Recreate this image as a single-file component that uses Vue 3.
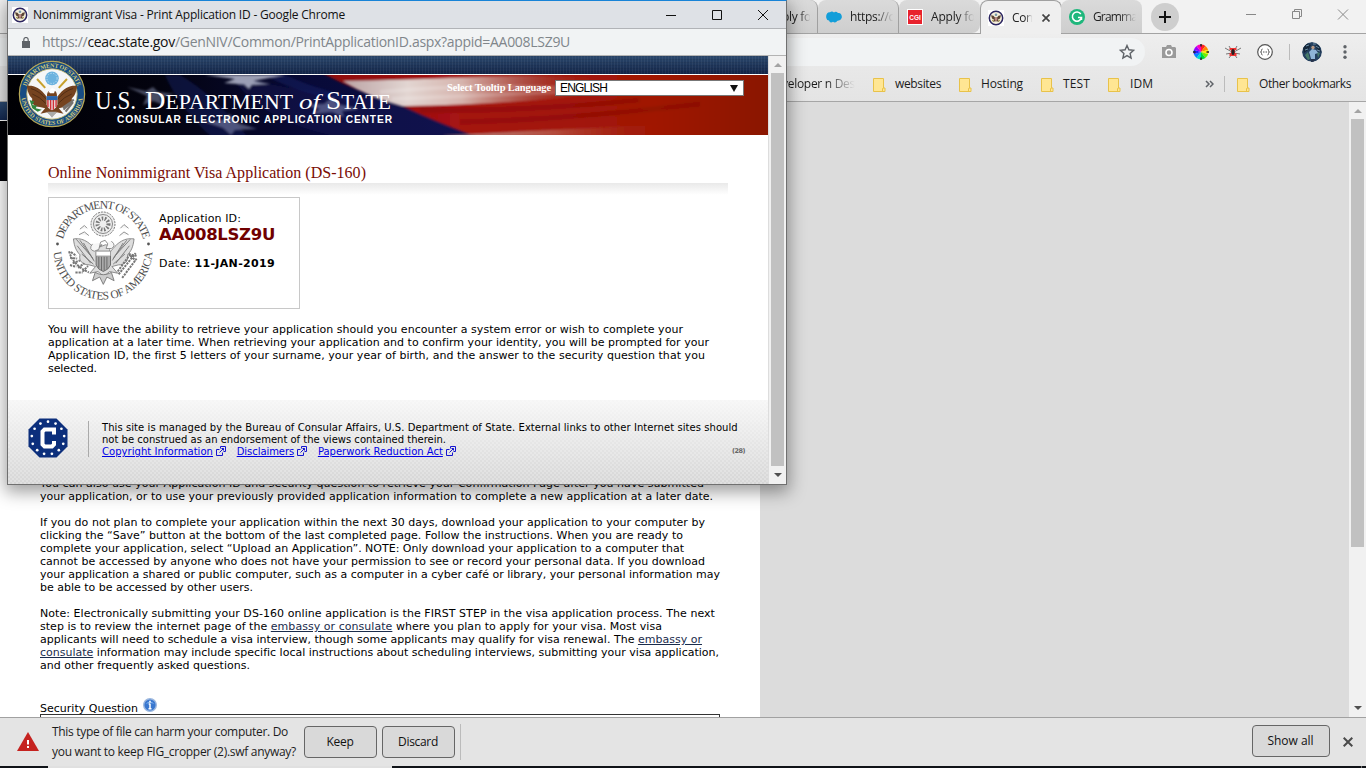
<script setup>
const fit = (el, { value }) => {
  el.style.letterSpacing = '0px'
  const natural = el.getBoundingClientRect().width
  el.style.letterSpacing = (value - natural) / el.textContent.length + 'px'
}
const vFit = { mounted: fit }

const tabs = [
  { text: 'ply fo', icon: 'none', w: 29 },
  { text: 'https://c', icon: 'cloud', w: 44 },
  { text: 'Apply fo', icon: 'cgi', w: 44 },
  { text: 'Con', icon: 'seal', w: 21, active: true },
  { text: 'Gramma', icon: 'g', w: 44 },
]
const marks = [
  { text: 'websites', w: 46 },
  { text: 'Hosting', w: 42 },
  { text: 'TEST', w: 27 },
  { text: 'IDM', w: 23 },
]
const retrieve = [
  [['You can also use your Application ID and security question to retrieve your Confirmation Page after you have submitted'], 664],
  [['your application, or to use your previously provided application information to complete a new application at a later date.'], 673],
]
const upload = [
  [['If you do not plan to complete your application within the next 30 days, download your application to your computer by'], 665],
  [['clicking the “Save” button at the bottom of the last completed page. Follow the instructions. When you are ready to'], 643],
  [['complete your application, select “Upload an Application”. NOTE: Only download your application to a computer that'], 644],
  [['cannot be accessed by anyone who does not have your permission to see or record your personal data. If you download'], 665],
  [['your application a shared or public computer, such as a computer in a cyber café or library, your personal information may'], 680],
  [['be able to be accessed by other users.'], 213],
]
const note = [
  [['Note: Electronically submitting your DS-160 online application is the FIRST STEP in the visa application process. The next'], 675],
  [['step is to review the internet page of the ', '*embassy or consulate', ' where you plan to apply for your visa. Most visa'], 622],
  [['applicants will need to schedule a visa interview, though some applicants may qualify for visa renewal. The ', '*embassy or'], 662],
  [['*consulate', ' information may include specific local instructions about scheduling interviews, submitting your visa application,'], 679],
  [['and other frequently asked questions.'], 210],
]
const paragraphs = [retrieve, upload, note]
const ability = [
  ['You will have the ability to retrieve your application should you encounter a system error or wish to complete your', 635],
  ['application at a later time. When retrieving your application and to confirm your identity, you will be prompted for your', 661],
  ['Application ID, the first 5 letters of your surname, your year of birth, and the answer to the security question that you', 657],
  ['selected.', 49],
]
const links = [
  ['Copyright Information', 111],
  ['Disclaimers', 57.5],
  ['Paperwork Reduction Act', 125],
]
const wheel = ['#f22', '#f80', '#fe0', '#7e0', '#0d3', '#0dc', '#08f', '#22f', '#90f', '#f0b'].map((c, i) => {
  const a = (i * 36 - 90) * Math.PI / 180, b = ((i + 1) * 36 - 90) * Math.PI / 180
  return { c, d: `M8 8L${8 + 7.5 * Math.cos(a)} ${8 + 7.5 * Math.sin(a)}A7.5 7.5 0 0 1 ${8 + 7.5 * Math.cos(b)} ${8 + 7.5 * Math.sin(b)}Z` }
})
const dots = Array.from({ length: 13 }, (_, i) => {
  const a = (i * 360 / 13) * Math.PI / 180
  return { x: 20 + 16.3 * Math.sin(a), y: 20 - 16.3 * Math.cos(a) }
})
</script>

<template>
  <div class="desktop">
    <svg class="defs" width="0" height="0" aria-hidden="true">
      <symbol id="minis" viewBox="0 0 16 16">
        <rect width="16" height="16" fill="#fff" />
        <circle cx="8" cy="8" r="6.7" fill="#f6f0dc" stroke="#2b2560" stroke-width="1.5" />
        <path d="M3 5.200L5.500 5.800 7 7.500H9L10.500 5.800 13 5.200 12 8.500 9.800 9.800 11.500 11.800 8 11.200 4.500 11.800 6.200 9.800 4 8.500Z" fill="#5b4433" />
        <path d="M6.700 7.500h2.600v2.600L8 11.300 6.700 10.100Z" fill="#b88" />
        <circle cx="8" cy="4.800" r="1.300" fill="#79a" />
        <path d="M4 10l1.500 1M12 10l-1.500 1" stroke="#a93" />
      </symbol>
      <symbol id="eagle" viewBox="0 0 100 100">
        <path d="M48 45C43 45 42 52 43 55C31 38 21 37 13 38C14 48 17 53 21 57C19 65 25 69 32 69L40 71L33 79L43 77L50 83L57 77L67 79L60 71L68 69C75 69 81 65 79 57C83 53 86 48 87 38C79 37 69 38 57 55C58 52 57 45 52 45L44 48Z" />
      </symbol>
    </svg>

    <section class="browser">
      <div class="tabs">
        <div v-for="t in tabs" :key="t.text" class="tab" :class="{ active: t.active }">
          <svg class="fav" width="16" height="16" viewBox="0 0 16 16">
            <path v-if="t.icon === 'cloud'" d="M.3 9C-.3 6 1 3 4 3.200Q6 1.500 8 3.500Q10 2 12 4C15 3.500 16.300 6.500 15.700 9Q14.500 12 11.500 11.800Q9.500 14.500 7 12.800Q4 14.500 3 11.500Q.8 11.500 .3 9Z" fill="#139ed9" />
            <template v-else-if="t.icon === 'cgi'">
              <rect width="16" height="16" fill="#fff" /><rect x="1" y="1" width="14" height="14" fill="#e8222c" />
              <text x="8" y="10.600" text-anchor="middle" class="cgi">CGI</text>
            </template>
            <use v-else-if="t.icon === 'seal'" href="#minis" />
            <template v-else-if="t.icon === 'g'">
              <circle cx="8" cy="8" r="8" fill="#1fb77c" />
              <path d="M11.800 5A4.600 4.600 0 1 0 12.500 8.500H9M12.500 8.500V11" fill="none" stroke="#fff" stroke-width="1.500" />
            </template>
          </svg>
          <span v-fit="t.w" class="ttext">{{ t.text }}</span>
          <svg v-if="t.active" class="tclose" width="8" height="8" viewBox="0 0 8 8"><path d="M.5.5l7 7m0-7l-7 7" stroke="#444" stroke-width="1.700" /></svg>
        </div>
        <div class="plus"><svg width="12" height="12" viewBox="0 0 12 12"><path d="M6 0v12M0 6h12" stroke="#111" stroke-width="2" /></svg></div>
        <svg class="winbtns" width="106" height="16" viewBox="0 0 106 16" fill="none" stroke="#888">
          <path d="M1 8.500h10M47.500 5.500h7v7h-7zM49.500 5.500v-2h7v7h-2M93 3.500l10 10m0-10l-10 10" />
        </svg>
      </div>

      <div class="toolbar">
        <div class="omni">
          <svg width="16" height="16" viewBox="0 0 16 16"><path d="M8 1.500l1.900 4.300 4.700.5-3.500 3.100 1 4.600L8 11.600 3.900 14l1-4.600L1.400 6.300l4.700-.5z" fill="none" stroke="#5f6368" stroke-width="1.400" /></svg>
        </div>
        <svg class="ext" width="16" height="16" viewBox="0 0 16 16"><path d="M1 3h4L6 1h4l1 2h3l1 1v10H1z" fill="#9a9a9a" /><circle cx="8" cy="8.500" r="3" fill="none" stroke="#fff" stroke-width="1.600" /></svg>
        <svg class="ext" width="16" height="16" viewBox="0 0 16 16"><path v-for="w in wheel" :key="w.c" :d="w.d" :fill="w.c" /><path d="M8 0v2.500M8 13.500V16M0 8h2.500M13.500 8H16" stroke="#222" stroke-width="1.500" /></svg>
        <svg class="ext" width="16" height="16" viewBox="0 0 16 16"><path d="M7 7L4 2M9 7l3-5M7 8L0 4M9 8l7-4M7 9l-6 1M9 9l6 1M7 10l-3 4M9 10l3 4" stroke="#777" /><path d="M4.500 4h7v2H10v3h1.500v3h-7V9H6V6H4.500z" fill="#e33" /><ellipse cx="8" cy="8" rx="1.600" ry="3" fill="#222" /></svg>
        <svg class="ext" width="16" height="16" viewBox="0 0 16 16" fill="none" stroke="#555"><circle cx="8" cy="8" r="7.300" fill="#fff" stroke-width="1.200" /><path d="M5.500 5Q4.500 5 4.500 6.500T3.500 8Q4.500 8 4.500 9.500T5.500 11M10.500 5Q11.500 5 11.500 6.500T12.500 8Q11.500 8 11.500 9.500T10.500 11" /><path d="M6 8h4" stroke-dasharray="1 .5" /></svg>
        <i class="sep"></i>
        <svg class="avatar" width="20" height="20" viewBox="0 0 20 20"><circle cx="10" cy="10" r="10" fill="#25405f" /><path d="M1 6L5 1.500 9 3 6 8 2 11zM13 2l4 2 2 6-4-3z" fill="#15273a" /><path d="M4 4l3-1M3 8l3-1M14 4l3 2M11 2l3 0M15 8l3 1" stroke="#6d8fa8" /><path d="M3 13l3-3 2 7-2 1zM15 10l3 1-2 5z" fill="#477a6a" /><path d="M7 10l3-3 4 1 2 3-3 1v5H9l-1-4z" fill="#8eb4d6" /><circle cx="11" cy="5.500" r="1.700" fill="#b99984" /><path d="M9 17h4l-1 3h-3z" fill="#26334c" /></svg>
        <svg class="menu" width="4" height="16" viewBox="0 0 4 16" fill="#5f6368"><circle cx="2" cy="2.700" r="1.700" /><circle cx="2" cy="8" r="1.700" /><circle cx="2" cy="13.300" r="1.700" /></svg>
      </div>

      <div class="bookmarks">
        <span v-fit="73" class="dev">veloper n Des</span>
        <div class="marks">
          <div v-for="m in marks" :key="m.text" class="mark">
            <svg width="13" height="14" viewBox="0 0 13 14"><path d="M.5.500h10v9.500h1.500v3.500H.5z" fill="#ffe693" stroke="#e8c24a" /><path d="M9.500 13v-2.500h1" fill="none" stroke="#e8c24a" /></svg>
            <span v-fit="m.w">{{ m.text }}</span>
          </div>
        </div>
        <svg class="more" width="9" height="8" viewBox="0 0 9 8"><path d="M1 1l3 3-3 3M5 1l3 3-3 3" fill="none" stroke="#5f6368" stroke-width="1.500" /></svg>
        <i class="sep"></i>
        <div class="mark other">
          <svg width="13" height="14" viewBox="0 0 13 14"><path d="M.5.500h10v9.500h1.500v3.500H.5z" fill="#ffe693" stroke="#e8c24a" /><path d="M9.500 13v-2.500h1" fill="none" stroke="#e8c24a" /></svg>
          <span v-fit="92">Other bookmarks</span>
        </div>
      </div>

      <div class="viewport">
        <main class="page">
          <div class="pagebar"></div>
          <div class="pageflag"></div>
          <div class="article">
            <div v-for="(p, i) in paragraphs" :key="i" class="para">
              <div v-for="(l, j) in p" :key="j" class="row"><span v-fit="l[1]" class="line"><span v-for="(s, k) in l[0]" :key="k" :class="{ inlink: s[0] === '*' }">{{ s.replace('*', '') }}</span></span></div>
            </div>
            <div class="question">
              <span v-fit="98" class="line">Security Question</span>
              <svg width="14" height="14" viewBox="0 0 14 14"><circle cx="7" cy="7" r="6.300" fill="#3977cf" stroke="#9db8df" stroke-width="1.400" /><path d="M2.500 6Q7 1 11.500 6Q7 4 2.500 6" fill="#83b5f1" /><path d="M7 2.800v1.700M7 5.800v5M5.700 6h1.500M5.500 10.700h3" stroke="#fff" stroke-width="1.500" /></svg>
            </div>
            <div class="field"></div>
          </div>
        </main>
        <div class="scroll outer"><i class="up"></i><b></b><i class="down"></i></div>
      </div>

      <footer class="downloads">
        <svg class="warn" width="22" height="20" viewBox="0 0 22 20"><path d="M11 0L22 19H0z" fill="#c5221f" /><path d="M11 8v4.500M11 14v2" stroke="#fff" stroke-width="2" /></svg>
        <div class="warning"><div><span v-fit="236">This type of file can harm your computer. Do</span></div><div><span v-fit="244">you want to keep FIG_cropper (2).swf anyway?</span></div></div>
        <button class="btn"><span v-fit="27">Keep</span></button>
        <button class="btn"><span v-fit="40">Discard</span></button>
        <i class="dsep"></i>
        <button class="btn all"><span v-fit="46">Show all</span></button>
        <svg width="10" height="10" viewBox="0 0 10 10"><path d="M.7.700l8.600 8.600m0-8.600L.7 9.300" stroke="#4a4a4a" stroke-width="2" /></svg>
      </footer>
      <div class="taskbar"><i class="lit"></i><i class="tick"></i></div>
    </section>

    <section class="popup">
      <div class="title">
        <svg width="16" height="16"><use href="#minis" /></svg>
        <span v-fit="312">Nonimmigrant Visa - Print Application ID - Google Chrome</span>
        <svg class="pbtns" width="104" height="12" viewBox="0 0 104 12" fill="none" stroke="#111"><path d="M0 6.500h10M46.500 1.500h9v9h-9zM92 1l10 10m0-10L92 11" /></svg>
      </div>
      <div class="address">
        <svg width="8" height="11" viewBox="0 0 8 11"><path d="M0 4h8v7H0z" fill="#5f6368" /><path d="M1.800 4V2.700a2.200 2.200 0 0 1 4.400 0V4" fill="none" stroke="#5f6368" stroke-width="1.200" /></svg>
        <span v-fit="528">https://<em>ceac.state.gov</em>/GenNIV/Common/PrintApplicationID.aspx?appid=AA008LSZ9U</span>
      </div>
      <div class="pbody">
        <div class="doc">
          <header class="banner">
            <div class="navy"></div>
            <svg class="flag" width="760" height="60" viewBox="8 75 760 60" preserveAspectRatio="none">
              <defs>
                <filter id="soft" x="-5%" y="-20%" width="110%" height="140%"><feGaussianBlur stdDeviation=".9" /></filter>
                <linearGradient id="night"><stop offset="0" stop-color="#000004" /><stop offset=".2" stop-color="#03030f" /><stop offset=".4" stop-color="#080a38" /><stop offset=".6" stop-color="#0a0d4a" /></linearGradient>
                <linearGradient id="red" gradientUnits="userSpaceOnUse" x1="320" y1="0" x2="768" y2="0"><stop offset="0" stop-color="#8c0a10" /><stop offset=".3" stop-color="#a51212" /><stop offset=".75" stop-color="#a01804" /><stop offset="1" stop-color="#8a1200" /></linearGradient>
                <linearGradient id="white" gradientUnits="userSpaceOnUse" x1="340" y1="0" x2="610" y2="0"><stop offset="0" stop-color="#b9a0a2" /><stop offset=".25" stop-color="#e2d5d1" /><stop offset=".45" stop-color="#d6b4ad" /><stop offset=".72" stop-color="#ab4e42" stop-opacity=".75" /><stop offset="1" stop-color="#a01804" stop-opacity="0" /></linearGradient>
                <linearGradient id="low" gradientUnits="userSpaceOnUse" x1="440" y1="0" x2="670" y2="0"><stop offset="0" stop-color="#b68c87" /><stop offset=".5" stop-color="#b44b3c" /><stop offset="1" stop-color="#a01804" stop-opacity="0" /></linearGradient>
              </defs>
              <rect x="8" y="75" width="760" height="60" fill="url(#night)" />
              <g filter="url(#soft)">
                <path d="M230 75Q320 97 390 98L480 135H330Q260 120 230 75" fill="#111755" opacity=".45" />
                <path d="M180 75Q215 95 250 140H215Q180 110 165 75ZM285 75Q330 95 375 101L330 98Q290 90 265 75Z" fill="#1a2270" opacity=".4" />
                <path d="M322 73H772V138H480Q440 124 402 106Q360 93 322 73Z" fill="url(#red)" />
                <path d="M343 81Q400 80 450 78Q540 74 600 78L590 95Q510 104 402 106Q370 98 343 81Z" fill="url(#white)" />
                <path d="M380 92Q460 84 560 88M392 99Q480 95 560 92" stroke="#fff" stroke-opacity=".18" stroke-width="4" fill="none" />
                <path d="M420 110Q520 112 640 100M460 122Q560 120 700 104" stroke="#6a0000" stroke-opacity=".25" stroke-width="5" fill="none" />
                <path d="M442 136Q540 130 680 124V136Z" fill="url(#low)" />
                <path d="M205 75L235 79 224 83 250 85 270 84 253 81 285 75ZM241 82l8 7 5-7z" fill="#bfc3d4" opacity=".8" />
                <path d="M127 87l19 4 7-4 5 5 16 2-14 4 4 7-11-4-10 4 4-9zM205 122l18-2 7-6 5 8 22 7-22 1-4 5-8-7zM306 105l18-1 9-7 4 7 22 5-17 2 2 6-12-5-20 2 8-5z" fill="#9ca4c8" opacity=".45" />
              </g>
            </svg>
            <svg class="seal" width="68" height="68" viewBox="0 0 100 100">
              <defs><path id="ring1" d="M11 50A39 39 0 0 1 89 50" /><path id="ring2" d="M4.500 50A45.500 45.500 0 0 0 95.500 50" /></defs>
              <circle cx="50" cy="50" r="48" fill="#174c83" stroke="#b8a957" stroke-width="1.800" />
              <circle cx="50" cy="50" r="37" fill="#f5f6f7" stroke="#c2b66d" stroke-width="1.300" />
              <text class="ring gold"><textPath href="#ring1" startOffset="50%" text-anchor="middle" textLength="100">DEPARTMENT OF STATE</textPath></text>
              <text class="ring gold"><textPath href="#ring2" startOffset="50%" text-anchor="middle" textLength="130">UNITED STATES OF AMERICA</textPath></text>
              <circle cx="50" cy="27" r="10" fill="#6bb2df" /><circle cx="50" cy="27" r="7.500" fill="none" stroke="#d9edf8" stroke-dasharray="2 2" />
              <path d="M28 28l12 13M72 28L60 41" stroke="#c7a12d" stroke-width="3" />
              <use href="#eagle" fill="#75431f" />
              <path d="M19 42q12 3 24 17M21 50q11 4 20 14M81 42q-12 3-24 17M79 50q-11 4-20 14" stroke="#42230f" fill="none" />
              <path d="M42 53h16v12q-1 6-8 9q-7-3-8-9z" fill="#e9d9d9" /><path d="M42 53h16v6H42z" fill="#2b66ad" /><path d="M44 59v10M48 59v14M52 59v14M56 59v10" stroke="#d03036" stroke-width="2" />
              <path d="M45 46l5-5 5 2-2 6h-6z" fill="#fff" />
              <path d="M17 59l7 2-3 5 7 1-2 4 9 2-6 3-8-5z" fill="#30863c" /><path d="M67 73l15-15M66 70l13-9M70 76l11-14" stroke="#77726e" stroke-width="3" /><path d="M43 76l7 9 7-9" fill="#aaa" />
            </svg>
            <svg class="brand" width="310" height="50" viewBox="90 82 310 50">
              <g class="dept">
                <text x="95" y="108.500" textLength="41" lengthAdjust="spacingAndGlyphs" font-size="25">U.S.</text>
                <text x="145" y="108.500" textLength="148" lengthAdjust="spacingAndGlyphs"><tspan font-size="26">D</tspan><tspan font-size="20">EPARTMENT</tspan></text>
                <text x="299" y="108.500" textLength="21" lengthAdjust="spacingAndGlyphs" font-size="22" font-style="italic">of</text>
                <text x="326" y="108.500" textLength="65" lengthAdjust="spacingAndGlyphs"><tspan font-size="26">S</tspan><tspan font-size="20">TATE</tspan></text>
              </g>
              <text class="ceac" x="117" y="122.700" textLength="275">CONSULAR ELECTRONIC APPLICATION CENTER</text>
            </svg>
            <div class="tooltip"><span v-fit="104">Select Tooltip Language</span><div class="select"><span v-fit="47">ENGLISH</span><i></i></div></div>
          </header>

          <div class="main">
            <h1><span v-fit="318">Online Nonimmigrant Visa Application (DS-160)</span></h1>
            <div class="rule"></div>
            <div class="card">
              <svg width="104" height="104" viewBox="0 0 104 104">
                <defs><path id="ring3" d="M10.500 52A41.500 41.500 0 0 1 93.500 52" /><path id="ring4" d="M2.500 52A49.500 49.500 0 0 0 101.500 52" /></defs>
                <text class="ring gray"><textPath href="#ring3" startOffset="50%" text-anchor="middle" textLength="109">DEPARTMENT OF STATE</textPath></text>
                <text class="ring gray"><textPath href="#ring4" startOffset="50%" text-anchor="middle" textLength="151">UNITED STATES OF AMERICA</textPath></text>
                <circle cx="6.500" cy="46" r="1.400" fill="#555" /><circle cx="97.500" cy="46" r="1.400" fill="#555" />
                <circle cx="52" cy="26" r="12" fill="#eee" stroke="#777" stroke-dasharray="2 1" /><circle cx="52" cy="26" r="9.500" fill="none" stroke="#888" /><circle cx="52" cy="26" r="5.500" fill="none" stroke="#777" stroke-width="4" stroke-dasharray="1.500 1.500" />
                <g transform="translate(5.500 4.500) scale(.9 .92)">
                  <use href="#eagle" x="7" y="5" width="91" height="91" fill="#ddd" stroke="#777" />
                  <path d="M22 40l18 20M26 41l15 21M30 44l12 20M23 47l15 19M28 56l13 11M82 40L64 59M78 41L63 61M74 44L62 63M81 47L66 66M76 56L63 67" stroke="#777" fill="none" />
                  <path d="M44 53h16v15q-2 5-8 7q-6-2-8-7z" fill="#aaa" stroke="#666" /><path d="M44 53h16v5H44z" fill="#fff" stroke="#888" stroke-width=".5" /><path d="M47 59v12M50 59v15M53 59v15M56 59v13" stroke="#666" />
                  <path d="M40 45q-5 6 2 8l5-2 2-8 5-2 3 4-2 5h6q6-3 0-8M26 29l5-4 3 3M71 28l4-4 5 4M25 35l6-3 5 4M70 36l5-4 5 3" stroke="#888" fill="#f6f6f6" />
                  <path d="M14 53q4 15 22 23M16 54l6 4M15 60l8 1M18 66l8-3M24 71l7-5M29 75l6-6M15 68l7 2M21 76l8 0M69 78l19-23M73 82l16-21M68 75l14-19M82 58l6 5M80 56l9 2" stroke="#777" stroke-width="2.200" fill="none" stroke-dasharray="2.500 1" />
                  <path d="M43 76l-3 9 8-4 4 8 4-8 8 4-3-9q-9 5-18 0z" fill="#ccc" stroke="#777" />
                </g>
              </svg>
              <div class="idbox">
                <div class="l"><span v-fit="82">Application ID:</span></div>
                <div class="id"><span v-fit="116">AA008LSZ9U</span></div>
                <div class="l date"><span v-fit="116">Date: <strong>11-JAN-2019</strong></span></div>
              </div>
            </div>
            <div class="able"><div v-for="l in ability" :key="l[0]" class="row"><span v-fit="l[1]" class="line">{{ l[0] }}</span></div></div>
          </div>

          <footer class="foot">
            <svg class="octo" width="40" height="40" viewBox="0 0 40 40"><path d="M11.500.500h17l11 11v17l-11 11h-17l-11-11v-17z" fill="#0c2f7c" /><circle v-for="(d, i) in dots" :key="i" :cx="d.x" :cy="d.y" r="1.350" fill="#fff" /><path d="M26 16.500V11.500H16.500L14.500 13.500V26.500L16.500 28.500H24L26 26.500V23" fill="none" stroke="#fff" stroke-width="4" /></svg>
            <div class="legal">
              <div><span v-fit="636">This site is managed by the Bureau of Consular Affairs, U.S. Department of State. External links to other Internet sites should</span></div>
              <div><span v-fit="344">not be construed as an endorsement of the views contained therein.</span></div>
              <div class="links"><div v-for="k in links" :key="k[0]" class="link"><a v-fit="k[1]">{{ k[0] }}</a><svg width="10" height="10" viewBox="0 0 10 10" fill="none" stroke="#1515d0"><path d="M3.500 3.500h-3v6h6v-3M4.500.500h5v5h-2M4.500.500v2M3.500 6.500l4-4M5.500 2.500h2v2" /></svg></div><small v-fit="13">(28)</small></div>
            </div>
          </footer>
        </div>
        <div class="scroll inner"><i class="up"></i><b></b><i class="down"></i></div>
      </div>
    </section>
  </div>
</template>

<style>
body { overflow: hidden; background: #ddd; }
</style>
<style scoped>
* { box-sizing: border-box; }
span, small, a { white-space: pre; }
svg { display: block; flex: none; }
.defs { position: absolute; }
.desktop { position: relative; width: 1366px; height: 768px; overflow: hidden; font: 12px/16px "Open Sans", "Noto Sans", sans-serif; color: #1c1c1c; }
.browser { display: flex; flex-direction: column; height: 768px; }
.tabs { display: flex; flex: none; height: 34px; padding-left: 737px; background: #f2f2f2; border-bottom: 1px solid #a3a3a3; }
.tab { display: flex; align-items: center; flex: none; width: 81px; height: 33px; padding: 0 7px 0 8px; overflow: hidden; background: linear-gradient(#dadada, #cecece); border-radius: 8px 8px 0 0; border-right: 1px solid #a0a0a0; }
.tab:nth-child(3) { border-right: 0; border-bottom-right-radius: 8px; }
.tab:nth-child(5) { border-right: 0; }
.tab.active { width: 82px; margin-right: -1px; height: 34px; border: 1px solid #a0a0a0; border-bottom: 0; background: #efefef; padding-left: 7px; }
.fav { margin-right: 8px; }
.tab .ttext { display: inline-block; flex: none; color: #222; -webkit-mask-image: linear-gradient(90deg, #000 60%, transparent 98%); mask-image: linear-gradient(90deg, #000 60%, transparent 98%); }
.tab:first-child .ttext { margin-left: 13px; }
.tclose { margin-left: 9px; }
.cgi { font: bold 6.5px "Liberation Sans", sans-serif; fill: #fff; }
.plus { display: grid; place-items: center; width: 28px; height: 28px; margin: 3px 0 0 9px; border-radius: 50%; background: #cecece; }
.winbtns { margin: 6px 15px 0 auto; }
.toolbar { display: flex; align-items: center; flex: none; height: 35px; background: linear-gradient(#eee, #e8e8e8); padding: 1px 0 0; }
.omni { width: 1145px; height: 28px; border-radius: 0 14px 14px 0; background: #f1f3f4; display: flex; align-items: center; justify-content: flex-end; padding-right: 10px; margin-right: 16px; }
.ext { margin-right: 16px; }
.sep { width: 1px; height: 16px; background: #bbb; flex: none; }
.avatar { margin: 0 12px; border-radius: 50%; }
.menu { margin-left: 9px; }
.bookmarks { display: flex; align-items: center; flex: none; height: 33px; padding: 0 0 2px 782px; background: linear-gradient(#e8e8e8, #e4e4e4); border-bottom: 1px solid #a6a6a6; }
.dev { display: inline-block; flex: none; -webkit-mask-image: linear-gradient(90deg, #000 60%, transparent); mask-image: linear-gradient(90deg, #000 60%, transparent); }
.marks { display: flex; margin-left: 18px; }
.mark { display: flex; align-items: center; flex: none; gap: 9px; margin-right: 18px; }
.mark svg { position: relative; top: 1px; }
.more { margin-left: 34px; margin-right: 10px; }
.other { margin-left: 12px; }
.viewport { display: flex; justify-content: space-between; flex: none; height: 615px; background: #dcdcdc; overflow: hidden; }
.page { width: 760px; height: 615px; background: #fff; overflow: hidden; color: #000; font: 11px/13px "DejaVu Sans", sans-serif; }
.pagebar { height: 19px; background: linear-gradient(#2b4a72, #132850); border-bottom: 1px solid #fff; }
.pageflag { height: 60px; background: #000006; }
.article { padding: 296px 40px 0; }
.para { margin-bottom: 13px; }
.row { height: 13px; white-space: nowrap; }
.inlink { text-decoration: underline; color: #1a2c4c; }
.question { display: flex; align-items: flex-end; gap: 5px; height: 28px; margin-top: 14px; }
.question .line { position: relative; top: 1px; }
.question svg { margin-bottom: 2px; }
.field { width: 680px; height: 20px; border: 1px solid #333; }
.scroll { display: flex; flex-direction: column; align-items: center; justify-content: space-between; background: #f1f1f1; flex: none; }
.scroll b { width: 13px; background: #c1c1c1; }
.scroll i { border: 4px solid transparent; width: 0; height: 0; flex: none; }
.up { border-top: 0 !important; border-bottom-color: #a3a3a3 !important; }
.down { border-bottom: 0 !important; border-top-color: #505050 !important; }
.outer { width: 17px; padding: 7px 0 7px; }
.outer .down { margin-top: auto; }
.outer b { height: 428px; margin-top: 6px; }
.downloads { display: flex; align-items: center; flex: none; height: 49px; padding: 0 13px 1px 17px; background: #e4e4e4; border-top: 1px solid #a1a1a1; }
.warning { width: 252px; margin-left: 13px; line-height: 20px; }
.btn { width: 73px; height: 32px; margin: 1px 5px 0 0; padding: 0 1px 1px 0; border: 1px solid #666; border-radius: 4px; background: #d9d9d9; font: 12px/16px "Open Sans", sans-serif; color: #111; }
.dsep { width: 1px; height: 36px; background: #bbb; }
.all { width: 78px; margin: -1px 13px 0 auto; }
.taskbar { display: flex; justify-content: space-between; flex: none; height: 2px; background: #101318; }
.lit { width: 344px; margin-left: 48px; background: #e0e0e0; }
.tick { width: 1px; margin-right: 4px; background: #777; }

.popup { position: absolute; left: 7px; top: 0; width: 780px; height: 485px; display: flex; flex-direction: column; border: 1px solid #707070; border-top-color: #1883d7; background: #fff; box-shadow: 0 5px 16px 2px rgba(0, 0, 0, .38); }
.title { display: flex; align-items: center; flex: none; height: 28px; padding: 0 16px 0 4px; gap: 5px; background: #dee1e6; border-bottom: 1px solid #b1b3b7; color: #111; }
.pbtns { margin-left: auto; }
.title span, .address span { display: inline-block; }
.address { display: flex; align-items: center; flex: none; height: 27px; padding: 0 14px; gap: 12px; background: #f1f3f4; border-bottom: 1px solid #b3b3b3; color: #80868b; font-size: 14px; }
.address em { font-style: normal; color: #111; }
.pbody { display: flex; flex: 1; min-height: 0; }
.doc { width: 760px; display: flex; flex-direction: column; color: #000; font: 11px/13px "DejaVu Sans", sans-serif; }
.banner { position: relative; flex: none; height: 79px; }
.navy { height: 19px; border-bottom: 1px solid #fff; background: repeating-linear-gradient(90deg, rgba(255, 255, 255, .05) 0 1px, transparent 1px 3px), repeating-linear-gradient(rgba(0, 0, 0, .07) 0 1px, transparent 1px 3px), linear-gradient(#2b486d, #132548); }
.seal { position: absolute; left: 10px; top: 4px; }
.brand { position: absolute; left: 82px; top: 26px; }
.dept { fill: #fff; font-family: "Liberation Serif", serif; }
.ceac { fill: #fff; font: bold 10.2px "Liberation Sans", sans-serif; }
.ring { font-family: "Liberation Serif", serif; }
.gold { fill: #d3ca7a; font-size: 9px; font-weight: bold; }
.gray { fill: #4d4d4d; font-size: 11.5px; }
.tooltip { position: absolute; right: 24px; top: 24px; display: flex; align-items: center; gap: 4px; height: 16px; color: #fff; font: bold 10.5px/16px "Liberation Serif", serif; }
.select { display: flex; align-items: center; justify-content: space-between; width: 189px; height: 16px; padding: 0 5px 0 4px; border: 1px solid #777; background: #fff; color: #000; font: 12px/14px "Liberation Sans", sans-serif; }
.select i { border: 4px solid transparent; border-top: 7px solid #111; border-bottom: 0; }
.main { flex: none; height: 265px; padding: 28px 40px 0; background: #fff; }
h1 { margin: 0; height: 20px; color: #7a0c05; font: 16px/20px "Liberation Serif", serif; }
.rule { height: 14px; background: linear-gradient(#e9e9e9, #fff 85%); }
.card { display: flex; width: 252px; height: 112px; border: 1px solid #c8c8c8; padding: 0 0 0 2px; }
.idbox { padding: 14px 0 0 4px; }
.l { height: 13px; }
.id { height: 20px; font-size: 16.5px; line-height: 19px; font-weight: bold; color: #700000; }
.date { margin-top: 12px; }
.able { margin-top: 14px; }
.foot { display: flex; flex: 1; padding: 19px 20px 0; background: conic-gradient(rgba(255, 255, 255, .22) 25%, transparent 0 50%, rgba(255, 255, 255, .22) 0 75%, transparent 0) 0 0 / 4px 4px, linear-gradient(#f6f6f6, #d6d6d6); }
.octo { margin-top: -1px; }
.legal { position: relative; display: flex; flex-direction: column; margin: 2px 0 0 20px; height: 36px; padding: 1px 0 0 13px; border-left: 1px solid #aaa; font-size: 10px; line-height: 12px; }
.legal > div { height: 12px; flex: none; }
.links { display: flex; width: 643px; }
.link { display: flex; gap: 3px; margin-right: 10.700px; }
.link svg { margin-top: 0; }
.link a { color: #0000e6; text-decoration: underline; }
.links small { margin-left: auto; font-size: 6.5px; font-weight: bold; line-height: 11px; color: #666; }
.inner { width: 18px; padding: 7px 0 7px; border-left: 1px solid #ddd; }
.inner b { height: 393px; margin-top: 6px; }
.inner .down { margin-top: auto; }
</style>
